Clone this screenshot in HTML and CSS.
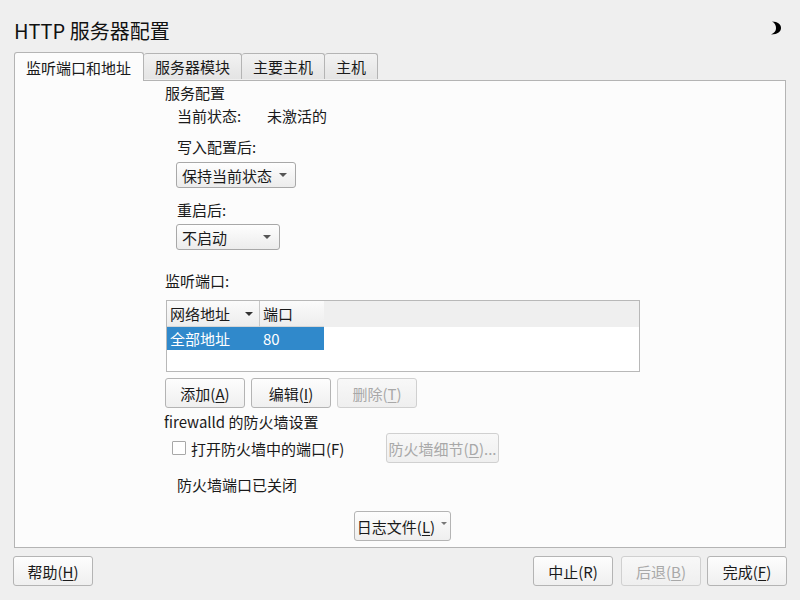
FILE: index.html
```html
<!DOCTYPE html>
<html lang="zh">
<head>
<meta charset="utf-8">
<title>HTTP 服务器配置</title>
<link rel="stylesheet" href="styles.css">
</head>
<body>
<div class="window">
  <div class="header">
    <h1 class="title">HTTP 服务器配置</h1>
    <svg class="moon" width="12" height="16" viewBox="0 0 12 16"><path d="M2 1.5 C8 1.5 11 4.5 11 8 C11 11.5 8 14.5 1 14.5 C5 12.5 6 10.5 6 8 C6 5.5 5 3 2 1.5 Z" fill="#000"/></svg>
  </div>
  <div class="tabs">
    <div class="tab active">监听端口和地址</div>
    <div class="tab">服务器模块</div>
    <div class="tab">主要主机</div>
    <div class="tab">主机</div>
  </div>
  <div class="panel">
    <div class="content">
      <div class="line section">服务配置</div>
      <div class="line status"><span class="status-label">当前状态:</span><span>未激活的</span></div>
      <div class="line indent after-write">写入配置后:</div>
      <div class="combo combo-keep"><span>保持当前状态</span><span class="arrow"></span></div>
      <div class="line indent after-restart">重启后:</div>
      <div class="combo combo-start"><span>不启动</span><span class="arrow"></span></div>
      <div class="line ports-label">监听端口:</div>
      <div class="table">
        <div class="thead">
          <div class="th th-addr"><span>网络地址</span><span class="arrow dark"></span></div>
          <div class="th th-port">端口</div>
        </div>
        <div class="row selected">
          <div class="td td-addr">全部地址</div>
          <div class="td td-port">80</div>
        </div>
      </div>
      <div class="btn-row">
        <button class="btn">添加(<u>A</u>)</button>
        <button class="btn">编辑(<u>I</u>)</button>
        <button class="btn disabled">删除(<u>T</u>)</button>
      </div>
      <div class="line fw-title">firewalld 的防火墙设置</div>
      <div class="fw-row">
        <label class="check"><span class="box"></span><span>打开防火墙中的端口(F)</span></label>
        <button class="btn disabled fw-details">防火墙细节(<u>D</u>)...</button>
      </div>
      <div class="line indent fw-status">防火墙端口已关闭</div>
    </div>
    <div class="log-row">
      <button class="btn log-btn">日志文件(<u>L</u>)<span class="arrow small"></span></button>
    </div>
  </div>
  <div class="footer">
    <button class="btn">帮助(<u>H</u>)</button>
    <div class="spacer"></div>
    <button class="btn">中止(R)</button>
    <button class="btn disabled back">后退(<u>B</u>)</button>
    <button class="btn finish">完成(<u>F</u>)</button>
  </div>
</div>
</body>
</html>
```
FILE: styles.css
```css
* { box-sizing: border-box; }
html, body {
  margin: 0;
  padding: 0;
  width: 800px;
  height: 600px;
  overflow: hidden;
  background: #efefef;
  font-family: "Noto Sans CJK SC", "Noto Sans", sans-serif;
  font-size: 15px;
  color: #1a1a1a;
}
.window {
  display: flex;
  flex-direction: column;
  height: 600px;
}
.header {
  height: 52px;
  display: flex;
  align-items: center;
  padding: 4px 18px 0 14px;
}
.title {
  margin: 6px 0 0 0;
  font-size: 20px;
  font-weight: normal;
  line-height: 28px;
  flex: 1;
  color: #111;
}
.moon { display: block; }
.tabs {
  display: flex;
  align-items: flex-end;
  height: 28px;
  padding-left: 14px;
  position: relative;
  z-index: 1;
}
.tab {
  height: 26px;
  padding: 0 11px;
  border: 1px solid #b4b4b4;
  border-bottom: none;
  border-left: none;
  border-radius: 3px 3px 0 0;
  background: linear-gradient(#f2f2f2, #e4e4e4);
  line-height: 26px;
  color: #1a1a1a;
  margin-bottom: 1px;
}
.tab.active {
  height: 29px;
  margin-bottom: -1px;
  border-left: 1px solid #b4b4b4;
  background: #fcfcfc;
  padding: 0 12px 0 11px;
  line-height: 30px;
}
.panel {
  margin: 0 14px;
  height: 468px;
  border: 1px solid #b4b4b4;
  background: #fcfcfc;
  display: flex;
  flex-direction: column;
}
.content {
  padding-left: 150px;
  padding-top: 2px;
  display: flex;
  flex-direction: column;
  align-items: flex-start;
}
.line {
  height: 20px;
  line-height: 20px;
  white-space: nowrap;
}
.indent { padding-left: 12px; }
.status { margin-top: 3px; padding-left: 12px; display: flex; }
.status-label { width: 90px; }
.after-write { margin-top: 11px; }
.combo {
  margin-left: 11px;
  height: 26px;
  border: 1px solid #a8a8a8;
  border-radius: 3px;
  background: linear-gradient(#fefefe, #ececec);
  display: flex;
  align-items: center;
  padding: 0 8px 0 5px;
  justify-content: space-between;
}
.combo-keep { margin-top: 5px; width: 120px; }
.combo-start { margin-top: 4px; width: 104px; }
.arrow {
  width: 0;
  height: 0;
  border-left: 4px solid transparent;
  border-right: 4px solid transparent;
  border-top: 4px solid #555;
}
.arrow.dark { border-top-color: #333; }
.arrow.small {
  border-left-width: 3px;
  border-right-width: 3px;
  border-top-width: 3px;
  border-top-color: #777;
  margin-left: 6px;
  margin-top: -6px;
}
.after-restart { margin-top: 12px; }
.ports-label { margin-top: 21px; }
.table {
  margin-top: 9px;
  margin-left: 1px;
  width: 474px;
  height: 72px;
  border: 1px solid #b8b8b8;
  background: #fff;
}
.thead {
  display: flex;
  height: 26px;
  background: #efefef;
}
.th {
  height: 26px;
  line-height: 26px;
  padding-left: 3px;
  background: linear-gradient(#fbfbfb, #ededed);
  border-right: 1px solid #c8c8c8;
  border-bottom: 1px solid #d6d6d6;
}
.th-addr {
  width: 93px;
  display: flex;
  align-items: center;
  justify-content: space-between;
  padding-right: 6px;
}
.th-port { width: 64px; border-right: none; }
.row { display: flex; height: 23px; }
.selected { width: 157px; background: #3089cb; color: #fff; }
.td { line-height: 23px; padding-left: 3px; }
.td-addr { width: 93px; }
.td-port { width: 64px; }
.btn-row {
  margin-top: 6px;
  display: flex;
  gap: 6px;
}
.btn {
  height: 30px;
  min-width: 80px;
  border: 1px solid #b4b4b4;
  border-radius: 3px;
  background: linear-gradient(#fdfdfd, #efefef);
  font-family: inherit;
  font-size: 15px;
  color: #1a1a1a;
  padding: 0 8px;
  display: flex;
  align-items: center;
  justify-content: center;
  white-space: nowrap;
}
.btn u { text-decoration-thickness: 1px; text-underline-offset: 2px; }
.btn.disabled {
  color: #a8a8a8;
  border-color: #d0d0d0;
  background: linear-gradient(#f8f8f8, #efefef);
}
.fw-title { margin-top: 4px; margin-left: -1px; }
.fw-row {
  margin-top: 1px;
  display: flex;
  align-items: center;
  height: 30px;
}
.check {
  display: flex;
  align-items: center;
  width: 221px;
  padding-left: 7px;
}
.box {
  width: 14px;
  height: 14px;
  border: 1px solid #a8a8a8;
  background: #fff;
  margin-right: 5px;
  border-radius: 1px;
}
.fw-details { width: 113px; padding: 0 4px; }
.fw-status { margin-top: 12px; }
.log-row {
  margin-top: 16px;
  display: flex;
  justify-content: center;
  padding-left: 4px;
}
.log-btn { width: 97px; padding: 0 6px; }
.footer {
  display: flex;
  padding: 8px 13px 0 13px;
}
.spacer { flex: 1; }
.footer .btn { width: 80px; flex: none; }
.footer .back { margin-left: 8px; }
.footer .finish { margin-left: 6px; }
```
